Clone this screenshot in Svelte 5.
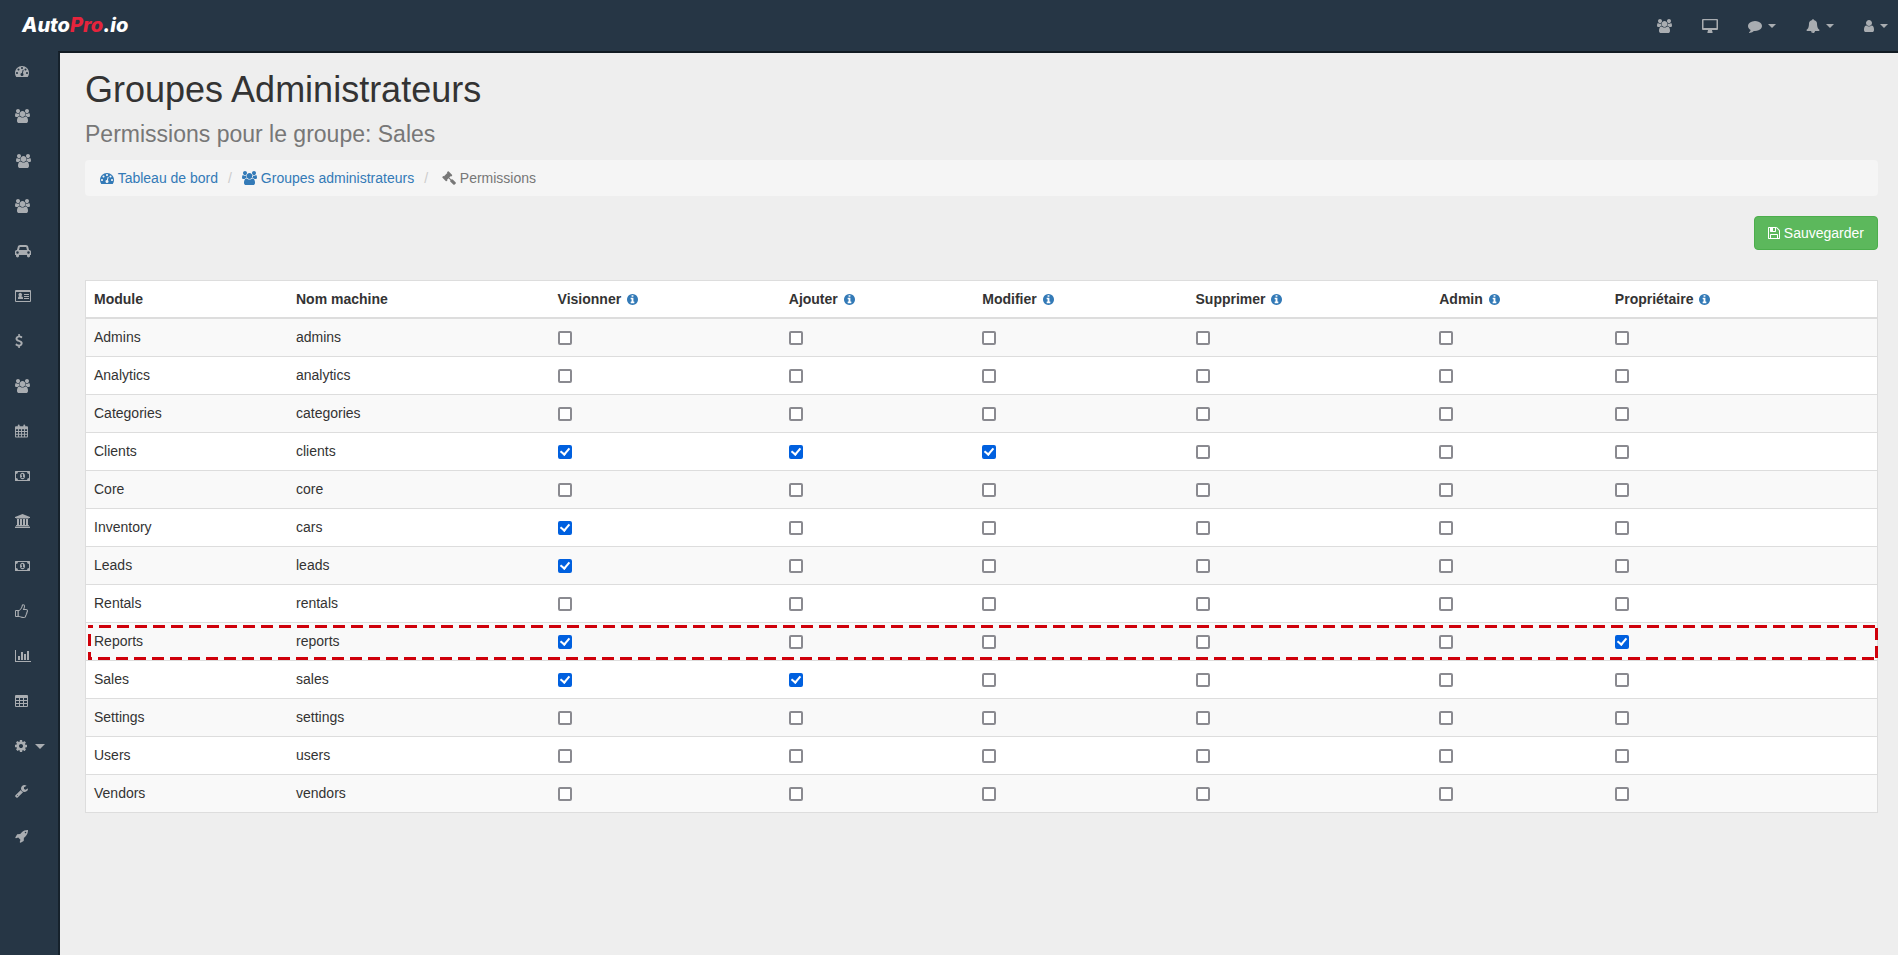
<script lang="ts">
  type Icon = { box: string; w: number; h?: number; d: string };

  const icons: Record<string, Icon> = {
    users: {
      box: '0 0 1920 1792',
      w: 15,
      d: 'M593 896q-162 5-265 128h-134q-82 0-138-40.5t-56-118.500q0-353 124-353 6 0 43.500 21t97.500 42.500 119 21.500q67 0 133-23-5 37-5 66 0 139 81 256zm1071 637q0 120-73 189.500t-194 69.500h-874q-121 0-194-69.500t-73-189.500q0-53 3.500-103.500t14-109 26.500-108.500 43-97.500 62-81 85.500-53.500 111.500-20q10 0 43 21.500t73 48 107 48 135 21.500 135-21.500 107-48 73-48 43-21.500q61 0 111.500 20t85.500 53.500 62 81 43 97.500 26.500 108.500 14 109 3.500 103.500zm-1024-1277q0 106-75 181t-181 75-181-75-75-181 75-181 181-75 181 75 75 181zm704 384q0 159-112.500 271.500t-271.500 112.500-271.500-112.500-112.500-271.500 112.500-271.500 271.500-112.500 271.500 112.500 112.500 271.500zm576 225q0 78-56 118.500t-138 40.500h-134q-103-123-265-128 81-117 81-256 0-29-5-66 66 23 133 23 59 0 119-21.500t97.500-42.500 43.500-21q124 0 124 353zm-128-609q0 106-75 181t-181 75-181-75-75-181 75-181 181-75 181 75 75 181z'
    },
    tachometer: {
      box: '0 0 1792 1792',
      w: 14,
      d: 'M384 1152q0-53-37.500-90.500t-90.500-37.500-90.500 37.500-37.500 90.500 37.500 90.500 90.500 37.500 90.500-37.500 37.500-90.500zm192-448q0-53-37.500-90.500t-90.500-37.500-90.500 37.500-37.500 90.500 37.500 90.500 90.500 37.500 90.500-37.500 37.500-90.500zm428 481l101-382q6-26-7.500-48.500t-38.500-29.500-48 6.500-30 39.500l-101 382q-60 5-107 43.500t-63 98.500q-20 77 20 146t117 89 146-20 89-117q16-60-6-117t-72-91zm660-33q0-53-37.500-90.500t-90.500-37.500-90.500 37.500-37.500 90.500 37.500 90.500 90.500 37.500 90.500-37.500 37.500-90.500zm-640-640q0-53-37.500-90.500t-90.500-37.500-90.500 37.500-37.500 90.500 37.500 90.500 90.500 37.500 90.500-37.500 37.500-90.500zm448 192q0-53-37.500-90.500t-90.500-37.500-90.500 37.500-37.500 90.500 37.500 90.500 90.500 37.500 90.500-37.500 37.500-90.500zm320 448q0 261-141 483-19 29-54 29h-1402q-35 0-54-29-141-221-141-483 0-182 71-348t191-286 286-191 348-71 348 71 286 191 191 286 71 348z'
    },
    car: {
      box: '0 0 2048 1792',
      w: 16,
      d: 'M480 1088q0-66-47-113t-113-47-113 47-47 113 47 113 113 47 113-47 47-113zm36-320h1016l-89-357q-2-8-14-17.500t-21-9.500h-768q-9 0-21 9.500t-14 17.500zm1372 320q0-66-47-113t-113-47-113 47-47 113 47 113 113 47 113-47 47-113zm160-96v384q0 14-9 23t-23 9h-96v128q0 80-56 136t-136 56-136-56-56-136v-128h-1024v128q0 80-56 136t-136 56-136-56-56-136v-128h-96q-14 0-23-9t-9-23v-384q0-93 65.500-158.500t158.500-65.500h28l105-419q23-94 104-157.500t179-63.500h768q98 0 179 63.500t104 157.500l105 419h28q93 0 158.500 65.500t65.500 158.500z'
    },
    card: {
      box: '0 0 16 14',
      w: 16,
      d: 'M1 1h14q1 0 1 1v10q0 1-1 1H1q-1 0-1-1V2q0-1 1-1zM1 3v9h14V3zM3 10V9q0-1.500 1.300-1.700a1.800 1.800 0 1 1 1.900 0Q8 7.500 8 9v1zM9 5h5v1H9zM9 7h5v1H9zM9 9h5v1H9z'
    },
    dollar: {
      box: '384 0 1024 1792',
      w: 8,
      d: 'M1362 1185q0 153-99.500 263.500t-258.500 136.500v175q0 14-9 23t-23 9h-135q-13 0-22.500-9.500t-9.500-22.500v-175q-66-9-127.500-31t-101.500-44.500-74-48-46.500-37.500-17.500-18q-17-21-2-41l103-135q7-10 23-12 15-2 24 9l2 2q113 99 243 125 37 8 74 8 81 0 142.500-43t61.500-122q0-28-15-53t-33.500-42-58.500-37.500-66-32-80-32.500q-39-16-61.500-25t-61.500-26.500-62.500-31-56.500-35.500-53.500-42.500-43.500-49-35.500-58-21-66.500-8.500-78q0-138 98-242t255-134v-180q0-13 9.500-22.500t22.500-9.500h135q14 0 23 9t9 23v176q57 6 110.500 23t87 33.500 63.500 37.500 39 29 15 14q17 18 5 38l-81 146q-8 15-23 16-14 3-27-7-3-3-14.500-12t-39-26.500-58.500-32-74.500-26-85.500-11.500q-95 0-155 43t-60 111q0 26 8.500 48t29.500 41.500 39.500 33 56 31 60.500 27 70 27.500q53 20 81 31.500t76 35 75.500 42.500 62 50 53 63.500 31.500 76.500 13 94z'
    },
    calendar: {
      box: '0 0 14 14',
      w: 13,
      d: 'M1 2h2V1q0-1 1-1t1 1v1h4V1q0-1 1-1t1 1v1h2q1 0 1 1v10q0 1-1 1H1q-1 0-1-1V3q0-1 1-1zM1 5v2h2.300V5zM4.300 5v2h2.200V5zM7.500 5v2h2.200V5zM10.700 5v2H13V5zM1 8v2h2.300V8zM4.300 8v2h2.200V8zM7.500 8v2h2.200V8zM10.700 8v2H13V8zM1 11v2h2.300v-2zM4.300 11v2h2.200v-2zM7.500 11v2h2.200v-2zM10.700 11v2H13v-2z'
    },
    money: {
      box: '0 0 15 14',
      w: 15,
      d: 'M.5 2h14q.5 0 .5.5v9q0 .5-.5.5H.5q-.5 0-.5-.5v-9Q0 2 .5 2zM3 3q0 2-2 2v4q2 0 2 2h9q0-2 2-2V5q-2 0-2-2zM7.500 3.800c1.700 0 2.500 1.500 2.500 3.200s-.8 3.200-2.500 3.200S5 8.700 5 7s.8-3.200 2.500-3.200zM7 5L6 6l.4.500L7 6.200V8.200H6.200V9h2.600V8.200H8V5z'
    },
    university: {
      box: '0 0 1920 1792',
      w: 15,
      d: 'M960 0l960 384v128h-128q0 26-20.500 45t-48.500 19h-1526q-28 0-48.500-19t-20.500-45h-128v-128zm-704 640h256v768h128v-768h256v768h128v-768h256v768h128v-768h256v768h59q28 0 48.500 19t20.500 45v64h-1664v-64q0-26 20.500-45t48.500-19h59v-768zm1595 960q28 0 48.500 19t20.500 45v128h-1920v-128q0-26 20.500-45t48.500-19h1782z'
    },
    thumb: {
      box: '0 0 13 14',
      w: 13,
      d: 'M1 6h3.200C5.500 5 6.300 3.500 6.600 2.200 6.800 1.200 7 .3 8 .3c1.400 0 2 .9 2 2.200 0 1-.4 1.700-.7 2.500H11c1.200 0 2 .9 2 2 0 .6-.2 1-.5 1.400 0 .7-.1 1.200-.6 1.700 0 .7-.2 1.200-.7 1.700 0 1.500-1 2.200-2.600 2.200-1.700 0-3-.5-4.300-1H1q-1 0-1-1V7q0-1 1-1zM1 7v5h1.500V7zM3.800 7v5c1.200.2 2.700 1 4.600 1 1.300 0 1.900-.5 1.700-1.600.7-.4.9-1.100.6-1.700.7-.5.800-1.200.5-1.800C11.700 7.700 12 7.400 12 7q0-1-1-1H7.800C8 5 9 3.800 9 2.500 9 1.700 8.800 1.300 8 1.300 7.500 2.500 7.500 3.600 6.500 4.800 5.500 6 4.900 7 3.800 7z'
    },
    chart: {
      box: '0 0 2048 1792',
      w: 16,
      d: 'M640 896v512h-256v-512h256zm384-512v1024h-256v-1024h256zm1024 1152v128h-2048v-1536h128v1408h1920zm-640-896v768h-256v-768h256zm384-384v1152h-256v-1152h256z'
    },
    table: {
      box: '0 0 13 14',
      w: 13,
      d: 'M1 1h11q1 0 1 1v10q0 1-1 1H1q-1 0-1-1V2q0-1 1-1zM1 4v2h3V4zM5 4v2h3V4zM9 4v2h3V4zM1 7v2h3V7zM5 7v2h3V7zM9 7v2h3V7zM1 10v2h3v-2zM5 10v2h3v-2zM9 10v2h3v-2z'
    },
    cog: {
      box: '128 0 1536 1792',
      w: 12,
      d: 'M1152 896q0-106-75-181t-181-75-181 75-75 181 75 181 181 75 181-75 75-181zm512-109v222q0 12-8 23t-20 13l-185 28q-19 54-39 91 35 50 107 138 10 12 10 25t-9 23q-27 37-99 108t-94 71q-12 0-26-9l-138-108q-44 23-91 38-16 136-29 186-7 28-36 28h-222q-14 0-24.500-8.500t-11.500-21.500l-28-184q-49-16-90-37l-141 107q-10 9-25 9-14 0-25-11-126-114-165-168-7-10-7-23 0-12 8-23 15-21 51-66.500t54-70.500q-27-50-41-99l-183-27q-13-2-21-12.500t-8-23.500v-222q0-12 8-23t19-13l186-28q14-46 39-92-40-57-107-138-10-12-10-24 0-10 9-23 26-36 98.500-107.500t94.500-71.500q13 0 26 10l138 107q44-23 91-38 16-136 29-186 7-28 36-28h222q14 0 24.500 8.500t11.500 21.500l28 184q49 16 90 37l142-107q9-9 24-9 13 0 25 10 129 119 165 170 7 8 7 22 0 12-8 23-15 21-51 66.500t-54 70.500q26 50 41 98l183 28q13 2 21 12.500t8 23.500z'
    },
    wrench: {
      box: '64 0 1664 1792',
      w: 13,
      d: 'M448 1472q0-26-19-45t-45-19-45 19-19 45 19 45 45 19 45-19 19-45zm644-420l-682 682q-37 37-90 37-52 0-91-37l-106-108q-38-36-38-90 0-53 38-91l681-681q39 98 114.500 173.500t173.500 114.500zm634-435q0 39-23 106-47 134-164.500 217.500t-258.500 83.500q-185 0-316.500-131.500t-131.500-316.500 131.500-316.500 316.500-131.500q58 0 121.500 16.500t107.500 46.500q16 11 16 28t-16 28l-293 169v224l193 107q5-3 79-48.500t135.500-81 70.500-35.500q15 0 23.500 10t8.500 25z'
    },
    rocket: {
      box: '0 0 1664 1792',
      w: 13,
      d: 'M1440 448q0-40-28-68t-68-28-68 28-28 68 28 68 68 28 68-28 28-68zm224-288q0 249-75.500 430.500t-253.500 360.500q-81 80-195 176l-20 379q-2 16-16 26l-384 224q-7 4-16 4-12 0-23-9l-64-64q-13-14-8-32l85-276-281-281-276 85q-3 1-9 1-14 0-23-9l-64-64q-17-19-5-39l224-384q10-14 26-16l379-20q96-114 176-195 188-187 358-258t431-71q14 0 24 9.500t10 22.500z'
    },
    desktop: {
      box: '0 0 16 14',
      w: 16,
      d: 'M1 0h14q1 0 1 1v9q0 1-1 1h-5q0 1 .6 2 .4 1-.6 1H6q-1 0-.6-1Q6 12 6 11H1q-1 0-1-1V1q0-1 1-1zM1.500 1.200V9h13V1.200z'
    },
    comment: {
      box: '0 0 1792 1792',
      w: 14,
      d: 'M1792 896q0 174-120 321.500t-326 233-450 85.500q-70 0-145-8-198 175-460 242-49 14-114 22-17 2-30.500-9t-17.500-29v-1q-3-4-.5-12t2-10 4.500-9.500l6-9 7-8.500 8-9q7-8 31-34.500t34.500-38 31-39.500 32.500-51 27-59 26-76q-157-89-247.500-220t-90.500-281q0-130 71-248.500t191-204.500 286-136.500 348-50.500q244 0 450 85.500t326 233 120 321.500z'
    },
    bell: {
      box: '0 0 1792 1792',
      w: 14,
      d: 'M912 1696q0-16-16-16-59 0-101.500-42.500t-42.500-101.500q0-16-16-16t-16 16q0 73 51.500 124.500t124.500 51.500q16 0 16-16zm816-288q0 52-38 90t-90 38h-448q0 106-75 181t-181 75-181-75-75-181h-448q-52 0-90-38t-38-90q50-42 91-88t85-119.500 74.500-158.500 50-206 19.500-260q0-152 117-282.500t307-158.500q-8-19-8-39 0-40 28-68t68-28 68 28 28 68q0 20-8 39 190 28 307 158.500t117 282.500q0 139 19.500 260t50 206 74.500 158.500 85 119.500 91 88z'
    },
    user: {
      box: '256 0 1280 1792',
      w: 10,
      d: 'M1536 1399q0 109-62.500 187t-150.500 78h-854q-88 0-150.500-78t-62.500-187q0-85 8.500-160.500t31.500-152 58.500-131 94-89 134.500-34.500q131 128 313 128t313-128q76 0 134.500 34.500t94 89 58.500 131 31.500 152 8.500 160.500zm-256-887q0 159-112.500 271.500t-271.500 112.500-271.500-112.500-112.500-271.500 112.500-271.500 271.500-112.500 271.500 112.500 112.500 271.500z'
    },
    gavel: {
      box: '0 0 1792 1792',
      w: 14,
      d: 'M1771 1536q0 53-37 90l-107 108q-39 37-91 37-53 0-90-37l-363-364q-38-36-38-90 0-53 43-96l-256-256-126 126q-14 14-34 14t-34-14q2 2 12.500 12t12.500 13 10 11.500 10 13.500 6 13.500 5.500 16.500 1.500 18q0 38-28 68-3 3-16.500 18t-19 20.500-18.500 16.500-22 15.500-22 9-26 4.500q-40 0-68-28l-408-408q-28-28-28-68 0-13 4.500-26t9-22 15.500-22 16.500-18.500 20.500-19 18-16.500q30-28 68-28 10 0 18 1.500t16.500 5.500 13.500 6 13.500 10 11.500 10 13 12.500 12 12.500q-14-14-14-34t14-34l348-348q14-14 34-14t34 14q-2-2-12.500-12t-12.500-13-10-11.500-10-13.500-6-13.500-5.500-16.500-1.500-18q0-38 28-68 3-3 16.500-18t19-20.500 18.500-16.500 22-15.500 22-9 26-4.500q40 0 68 28l408 408q28 28 28 68 0 13-4.500 26t-9 22-15.500 22-16.500 18.500-20.500 19-18 16.500q-30 28-68 28-10 0-18-1.500t-16.500-5.500-13.500-6-13.500-10-11.500-10-13-12.500-12-12.500q14 14 14 34t-14 34l-126 126 256 256q43-43 96-43 52 0 91 37l363 363q37 39 37 91z'
    },
    floppy: {
      box: '128 0 1536 1792',
      w: 12,
      d: 'M512 1536h768v-384h-768v384zm896 0h128v-896q0-14-10-38.500t-20-34.500l-281-281q-10-10-34-20t-39-10v416q0 40-28 68t-68 28h-576q-40 0-68-28t-28-68v-416h-128v1280h128v-416q0-40 28-68t68-28h832q40 0 68 28t28 68v416zm-384-928v-320q0-13-9.500-22.500t-22.500-9.500h-192q-13 0-22.500 9.500t-9.500 22.500v320q0 13 9.500 22.500t22.500 9.500h192q13 0 22.500-9.500t9.500-22.500zm640 32v928q0 40-28 68t-68 28h-1344q-40 0-68-28t-28-68v-1344q0-40 28-68t68-28h928q40 0 88 20t76 48l280 280q28 28 48 76t20 88z'
    },
    info: {
      box: '128 128 1536 1536',
      w: 11,
      h: 11,
      d: 'M1152 1376v-160q0-14-9-23t-23-9h-96v-512q0-14-9-23t-23-9h-320q-14 0-23 9t-9 23v160q0 14 9 23t23 9h96v320h-96q-14 0-23 9t-9 23v160q0 14 9 23t23 9h448q14 0 23-9t9-23zm-128-896v-160q0-14-9-23t-23-9h-192q-14 0-23 9t-9 23v160q0 14 9 23t23 9h192q14 0 23-9t9-23zm640 416q0 209-103 385.500t-279.500 279.500-385.500 103-385.500-103-279.500-279.500-103-385.500 103-385.500 279.500-279.500 385.500-103 385.500 103 279.500 279.500 103 385.500z'
    }
  };

  const sidebar = [
    { icon: 'tachometer', label: 'Tableau de bord' },
    { icon: 'users', label: 'Clients' },
    { icon: 'users', label: 'Prospects', inset: true },
    { icon: 'users', label: 'Fournisseurs' },
    { icon: 'car', label: 'Inventaire' },
    { icon: 'card', label: 'Locations' },
    { icon: 'dollar', label: 'Ventes' },
    { icon: 'users', label: 'Administrateurs' },
    { icon: 'calendar', label: 'Calendrier' },
    { icon: 'money', label: 'Paiements' },
    { icon: 'university', label: 'Banques' },
    { icon: 'money', label: 'Dépenses' },
    { icon: 'thumb', label: 'Approbations' },
    { icon: 'chart', label: 'Rapports' },
    { icon: 'table', label: 'Tableaux' },
    { icon: 'cog', label: 'Paramètres', caret: true },
    { icon: 'wrench', label: 'Outils' },
    { icon: 'rocket', label: 'Lancement' }
  ];

  const topbar = [
    { icon: 'users', label: 'Utilisateurs' },
    { icon: 'desktop', label: 'Site web' },
    { icon: 'comment', label: 'Messages', caret: true },
    { icon: 'bell', label: 'Notifications', caret: true },
    { icon: 'user', label: 'Profil', caret: true }
  ];

  const permissions = ['Visionner', 'Ajouter', 'Modifier', 'Supprimer', 'Admin', 'Propriétaire'];

  function row(name: string, machine: string, granted: string[] = []) {
    return { name, machine, checks: permissions.map((p) => granted.includes(p)) };
  }

  let modules = $state([
    row('Admins', 'admins'),
    row('Analytics', 'analytics'),
    row('Categories', 'categories'),
    row('Clients', 'clients', ['Visionner', 'Ajouter', 'Modifier']),
    row('Core', 'core'),
    row('Inventory', 'cars', ['Visionner']),
    row('Leads', 'leads', ['Visionner']),
    row('Rentals', 'rentals'),
    row('Reports', 'reports', ['Visionner', 'Propriétaire']),
    row('Sales', 'sales', ['Visionner', 'Ajouter']),
    row('Settings', 'settings'),
    row('Users', 'users'),
    row('Vendors', 'vendors')
  ]);

  const highlighted = 'reports';
</script>

{#snippet icon(name: string)}
  <svg
    class="icon"
    width={icons[name].w}
    height={icons[name].h ?? 14}
    viewBox={icons[name].box}
    aria-hidden="true"
  >
    <path fill-rule="evenodd" d={icons[name].d} />
  </svg>
{/snippet}

<div class="page">
  <header class="navbar">
    <a class="brand" href="#home">Auto<span>Pro</span>.io</a>
    <nav class="top-links">
      {#each topbar as item}
        <a href="#top" aria-label={item.label}>
          {@render icon(item.icon)}
          {#if item.caret}<i class="caret"></i>{/if}
        </a>
      {/each}
    </nav>
  </header>

  <div class="body">
    <nav class="sidebar">
      {#each sidebar as item}
        <a href="#side" aria-label={item.label} class:inset={item.inset}>
          {@render icon(item.icon)}
          {#if item.caret}<i class="caret large"></i>{/if}
        </a>
      {/each}
    </nav>

    <main>
      <h1>Groupes Administrateurs</h1>
      <h2>Permissions pour le groupe: Sales</h2>

      <ol class="breadcrumb">
        <li><a href="#dashboard">{@render icon('tachometer')} Tableau de bord</a></li>
        <li><a href="#groups">{@render icon('users')} Groupes administrateurs</a></li>
        <li class="active">&nbsp;{@render icon('gavel')} Permissions</li>
      </ol>

      <div class="actions">
        <button type="button" class="btn-save">{@render icon('floppy')} Sauvegarder</button>
      </div>

      <table>
        <colgroup>
          <col class="module" />
          <col class="machine" />
          <col class="view" />
          <col class="add" />
          <col class="edit" />
          <col class="delete" />
          <col class="admin" />
          <col />
        </colgroup>
        <thead>
          <tr>
            <th>Module</th>
            <th>Nom machine</th>
            {#each permissions as permission}
              <th>{permission} <span class="info">{@render icon('info')}</span></th>
            {/each}
          </tr>
        </thead>
        <tbody>
          {#each modules as module}
            <tr class:highlighted={module.machine === highlighted}>
              <td>
                {module.name}
                {#if module.machine === highlighted}
                  <svg class="outline" aria-hidden="true">
                    <rect width="100%" height="100%" />
                  </svg>
                {/if}
              </td>
              <td>{module.machine}</td>
              {#each permissions as permission, i}
                <td>
                  <input
                    type="checkbox"
                    aria-label="{permission} {module.name}"
                    bind:checked={module.checks[i]}
                  />
                </td>
              {/each}
            </tr>
          {/each}
        </tbody>
      </table>
    </main>
  </div>
</div>

<style>
  :global(body) {
    background: #eee;
  }

  .page {
    display: flex;
    flex-direction: column;
    min-height: 100vh;
    color: #333;
    font: 14px/20px "Helvetica Neue", Helvetica, "Liberation Sans", Arial, sans-serif;
  }

  .icon {
    fill: currentColor;
    vertical-align: -2px;
  }

  a {
    color: #337ab7;
    text-decoration: none;
  }

  .navbar {
    display: flex;
    align-items: center;
    justify-content: space-between;
    box-sizing: border-box;
    height: 51px;
    padding: 0 10px 0 22px;
    background: #263645;
  }

  .brand {
    padding-bottom: 2px;
    color: #fff;
    font: italic 800 20px/22px Inter, sans-serif;
  }

  .brand span {
    color: #e6243c;
  }

  .top-links {
    display: flex;
    gap: 30px;
  }

  .top-links a,
  .sidebar a {
    display: flex;
    align-items: center;
    height: 20px;
    color: #a9adb1;
  }

  .caret {
    margin-left: 6px;
    border: 4px solid transparent;
    border-top-color: currentColor;
    border-bottom: 0;
  }

  .caret.large {
    margin-left: 8px;
    border-width: 5px;
    border-bottom: 0;
  }

  .body {
    display: flex;
    flex: 1;
    background: #263645;
  }

  .sidebar {
    display: flex;
    flex-direction: column;
    flex: none;
    gap: 25px;
    box-sizing: border-box;
    width: 58px;
    padding: 10px 0 0 15px;
  }

  .sidebar .inset {
    padding-left: 1px;
  }

  main {
    flex: 1;
    min-width: 0;
    padding: 17px 20px 20px 25px;
    border-top: 2px solid #111a22;
    border-left: 2px solid #16222c;
    background: #eee;
  }

  h1,
  h2 {
    margin: 0;
    font-weight: 400;
  }

  h1 {
    font-size: 36px;
    line-height: 40px;
  }

  h2 {
    margin: 10px 0 12px;
    color: #777;
    font-size: 23px;
    line-height: 28px;
  }

  .breadcrumb {
    display: flex;
    margin: 0 0 20px;
    padding: 8px 15px;
    border-radius: 4px;
    background: #f5f5f5;
    list-style: none;
  }

  .breadcrumb li + li::before {
    content: "/";
    padding: 0 10px;
    color: #ccc;
  }

  .breadcrumb .active {
    color: #777;
  }

  .actions {
    display: flex;
    justify-content: flex-end;
    margin-bottom: 30px;
  }

  .btn-save {
    padding: 6px 13px;
    border: 1px solid #4cae4c;
    border-radius: 4px;
    background: #5cb85c;
    color: #fff;
    font: inherit;
    cursor: pointer;
  }

  table {
    width: 100%;
    table-layout: fixed;
    border: 1px solid #ddd;
    border-collapse: collapse;
    background: #fff;
  }

  .module {
    width: 11.3%;
  }

  .machine {
    width: 14.6%;
  }

  .view {
    width: 12.9%;
  }

  .add {
    width: 10.8%;
  }

  .edit {
    width: 11.9%;
  }

  .delete {
    width: 13.6%;
  }

  .admin {
    width: 9.8%;
  }

  th,
  td {
    padding: 8px;
    text-align: left;
    vertical-align: top;
  }

  th {
    border-bottom: 2px solid #ddd;
  }

  td {
    height: 21px;
    border-top: 1px solid #ddd;
  }

  tbody tr:nth-child(odd) {
    background: #f9f9f9;
  }

  .info {
    margin-left: 2px;
    color: #337ab7;
  }

  .info .icon {
    vertical-align: -1px;
  }

  input {
    display: block;
    box-sizing: border-box;
    width: 14px;
    height: 14px;
    margin: 4px 0 0;
    border: 2px solid #8a8a90;
    border-radius: 2px;
    background: #fff;
    appearance: none;
  }

  input:checked {
    border-color: #0060df;
    background: #0060df;
  }

  input:checked::after {
    content: "";
    display: block;
    box-sizing: border-box;
    width: 6px;
    height: 9px;
    margin: -1px 0 0 2px;
    border: solid #fff;
    border-width: 0 2px 2px 0;
    transform: rotate(40deg);
  }

  .highlighted {
    position: relative;
  }

  .outline {
    position: absolute;
    top: 2px;
    left: 2px;
    width: calc(100% - 2px);
    height: 35px;
    overflow: hidden;
    pointer-events: none;
  }

  /* half of the stroke is clipped by the svg box, leaving a 3px line */
  .outline rect {
    fill: none;
    stroke: #cf000a;
    stroke-width: 6px;
    stroke-dasharray: 12 6;
    stroke-dashoffset: 7px;
  }
</style>
